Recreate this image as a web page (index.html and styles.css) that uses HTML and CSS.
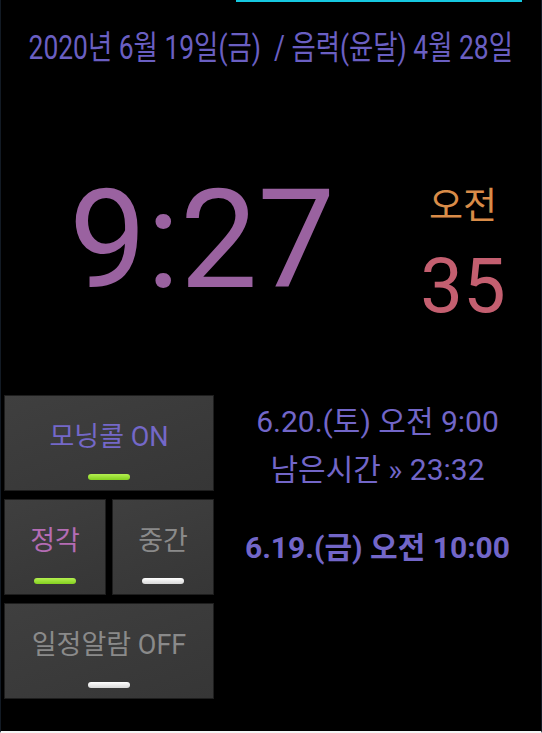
FILE: index.html
```html
<!DOCTYPE html>
<html lang="ko">
<head>
    <meta charset="UTF-8">
    <meta name="viewport" content="width=device-width, initial-scale=1.0">
    <title>모닝콜 시계</title>
    <link rel="stylesheet" href="styles.css">
</head>
<body>
    <div class="screen">
        <!-- Progress bar -->
        <div class="progress"></div>

        <!-- Date -->
        <div class="date-row">
            <span class="date-text">2020년 6월 19일(금) &nbsp;/ 음력(윤달) 4월 28일</span>
        </div>

        <!-- Clock -->
        <div class="clock">
            <div class="clock-main">9:27</div>
            <div class="clock-side">
                <div class="ampm">오전</div>
                <div class="seconds">35</div>
            </div>
        </div>

        <!-- Controls + alarm info -->
        <div class="bottom">
            <div class="buttons">
                <div class="btn wide on-blue">
                    <span class="btn-label">모닝콜 ON</span>
                    <span class="led green"></span>
                </div>
                <div class="btn on-pink">
                    <span class="btn-label">정각</span>
                    <span class="led green"></span>
                </div>
                <div class="btn off">
                    <span class="btn-label">중간</span>
                    <span class="led white"></span>
                </div>
                <div class="btn wide off">
                    <span class="btn-label">일정알람 OFF</span>
                    <span class="led white"></span>
                </div>
            </div>

            <div class="info">
                <p class="next-alarm">6.20.(토) 오전 9:00</p>
                <p class="remain">남은시간 » 23:32</p>
                <p class="schedule">6.19.(금) 오전 10:00</p>
            </div>
        </div>
    </div>
</body>
</html>
```

FILE: styles.css
```css
/* Reset */
html, body {
    margin: 0;
    padding: 0;
    background: #000;
}

body {
    font-family: 'Roboto', 'Noto Sans CJK KR', sans-serif;
    color: #fff;
}

.screen {
    box-sizing: border-box;
    width: 542px;
    height: 733px;
    border-left: 1px solid #121a24;
    border-right: 1px solid #121a24;
    border-bottom: 2px solid #f4f4f4;
    overflow: hidden;
}

/* Progress bar */
.progress {
    height: 2px;
    width: 286px;
    margin-left: 235px;
    background: #16c8e0;
}

/* Date */
.date-row {
    height: 86px;
    display: flex;
    justify-content: center;
    align-items: center;
}

.date-text {
    display: inline-block;
    font-size: 33px;
    color: #6a5fc2;
    white-space: nowrap;
    transform: scaleX(0.8);
}

/* Clock */
.clock {
    height: 292px;
    display: flex;
    align-items: flex-start;
}

.clock-main {
    width: 380px;
    padding-left: 68px;
    box-sizing: border-box;
    padding-top: 83px;
    font-size: 138px;
    line-height: 138px;
    color: #9a62a0;
}

.clock-side {
    flex: 1;
    display: flex;
    flex-direction: column;
    align-items: center;
    padding-top: 96px;
    padding-left: 4px;
}

.ampm {
    font-size: 37px;
    line-height: 46px;
    color: #d98c48;
}

.seconds {
    margin-top: 14px;
    font-size: 76px;
    line-height: 84px;
    color: #c45f70;
}

/* Buttons */
.bottom {
    display: flex;
    padding-top: 15px;
}

.buttons {
    margin-left: 3px;
    width: 210px;
    display: grid;
    grid-template-columns: 1fr 1fr;
    grid-auto-rows: 96px;
    column-gap: 6px;
    row-gap: 8px;
}

.btn {
    background: linear-gradient(160deg, #3f3f3f, #363636);
    border: 1px solid #1e1e1e;
    display: flex;
    flex-direction: column;
    align-items: center;
    justify-content: flex-end;
    padding-bottom: 10px;
}

.btn.wide {
    grid-column: span 2;
}

.btn-label {
    font-size: 27px;
    line-height: 32px;
    margin-bottom: 21px;
}

.on-blue .btn-label { color: #7468c8; }
.on-pink .btn-label { color: #b46cb4; }
.off .btn-label { color: #8a8a8a; }

.led {
    width: 42px;
    height: 6px;
    border-radius: 3px;
}

.led.green {
    background: linear-gradient(#b4f050, #84d020);
}

.led.white {
    background: linear-gradient(#ffffff, #d8d8d8);
}

/* Alarm info */
.info {
    flex: 1;
    text-align: center;
    color: #7266c8;
    padding-top: 7px;
}

.info p {
    margin: 0;
    font-size: 30px;
}

.next-alarm {
    line-height: 40px;
}

.remain {
    line-height: 56px;
}

.schedule {
    margin-top: 30px !important;
    font-weight: bold;
    line-height: 40px;
}
```
